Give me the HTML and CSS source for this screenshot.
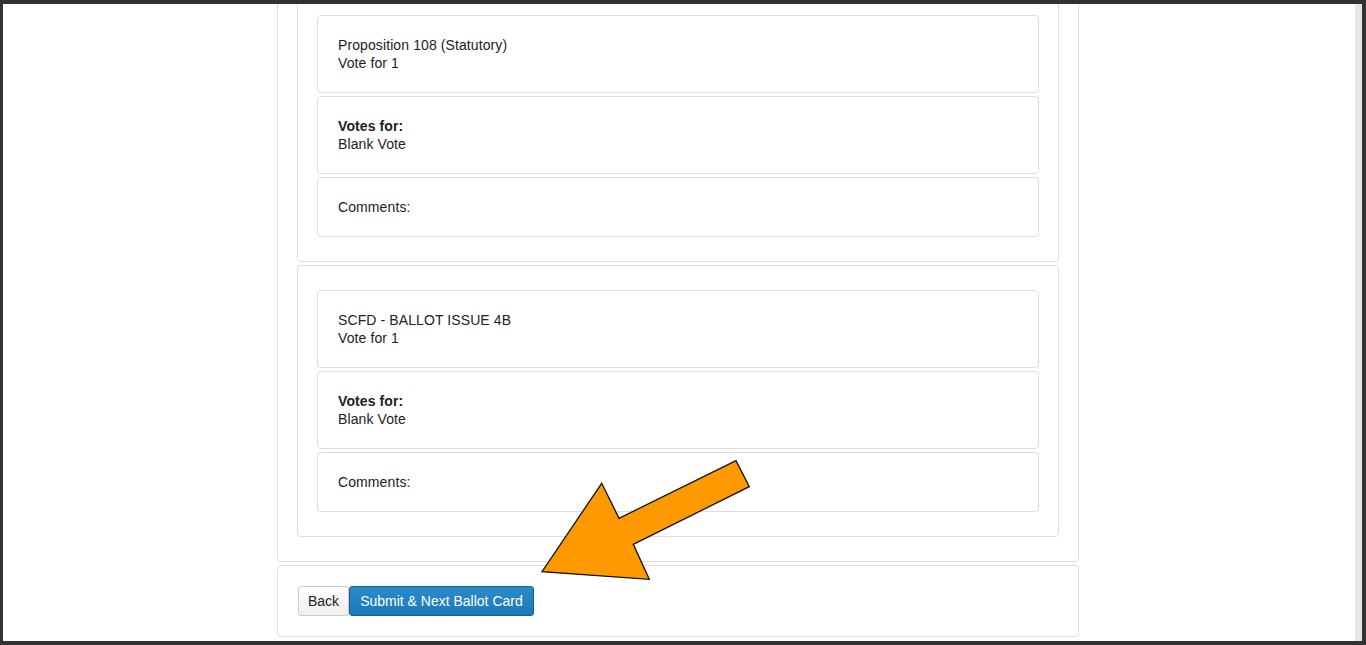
FILE: index.html
```html
<!DOCTYPE html>
<html lang="en">
<head>
<meta charset="utf-8">
<title>Ballot Card Review</title>
<link rel="stylesheet" href="styles.css">
</head>
<body>
<div class="frame">
  <div class="page">
    <div class="container">
      <div class="panel outer">
        <div class="panel inner">
          <div class="card">Proposition 108 (Statutory)<br>Vote for 1</div>
          <div class="card"><strong>Votes for:</strong><br>Blank Vote</div>
          <div class="card">Comments:</div>
        </div>
        <div class="panel inner">
          <div class="card">SCFD - BALLOT ISSUE 4B<br>Vote for 1</div>
          <div class="card"><strong>Votes for:</strong><br>Blank Vote</div>
          <div class="card">Comments:</div>
        </div>
      </div>
      <div class="panel footer">
        <button class="btn btn-default" type="button">Back</button><button class="btn btn-primary" type="button">Submit &amp; Next Ballot Card</button>
      </div>
    </div>
    <svg class="arrow" width="230" height="130" viewBox="530 455 230 130" aria-hidden="true">
      <polygon points="601.7,483.3 619,518.3 736,460.7 749.3,486.7 633.3,544.3 649.3,579.3 542,571.7" fill="#ff9900" stroke="#111" stroke-width="1.3" stroke-linejoin="miter"/>
    </svg>
  </div>
  <div class="scrollbar"></div>
</div>
</body>
</html>
```

FILE: styles.css
```css
html, body {
  margin: 0;
  padding: 0;
}

body {
  background: #333333;
  height: 645px;
  overflow: hidden;
  font-family: "Liberation Sans", Arial, sans-serif;
  font-size: 14px;
  line-height: 18px;
  color: #222;
}

.frame {
  margin: 4px 4px 4px 3px;
  height: 637px;
  background: #ffffff;
  display: flex;
  overflow: hidden;
}

.page {
  flex: 1;
  position: relative;
  overflow: hidden;
  padding-right: 2px;
}

.scrollbar {
  width: 7px;
  background: #e6e6e6;
}

.container {
  width: 802px;
  margin: 0 auto;
}

.panel {
  border: 1px solid #dddddd;
  border-radius: 4px;
  background: #fff;
  box-sizing: border-box;
}

.outer {
  margin-top: -39px;
  padding: 24px 19px;
  display: flex;
  flex-direction: column;
  gap: 3px;
}

.inner {
  padding: 24px 19px;
  display: flex;
  flex-direction: column;
  gap: 3px;
}

.card {
  border: 1px solid #dddddd;
  border-radius: 4px;
  padding: 20px;
  letter-spacing: 0.1px;
}

.card strong {
  font-weight: bold;
}

.footer {
  margin-top: 3px;
  padding: 20px;
  display: flex;
}

.btn {
  font-family: "Liberation Sans", Arial, sans-serif;
  font-size: 14px;
  line-height: 18px;
  padding: 5px 10px;
  border-radius: 3px;
  border: 1px solid;
  margin: 0;
  cursor: pointer;
}

.btn-default {
  padding: 5px 9px;
  background: linear-gradient(#ffffff, #eeeeee);
  border-color: #cccccc;
  color: #222;
}

.btn-primary {
  background: linear-gradient(#2a8ccb, #1c78b8);
  border-color: #1a5f90;
  color: #ffffff;
}

.arrow {
  position: absolute;
  left: 527px;
  top: 451px;
}
```
